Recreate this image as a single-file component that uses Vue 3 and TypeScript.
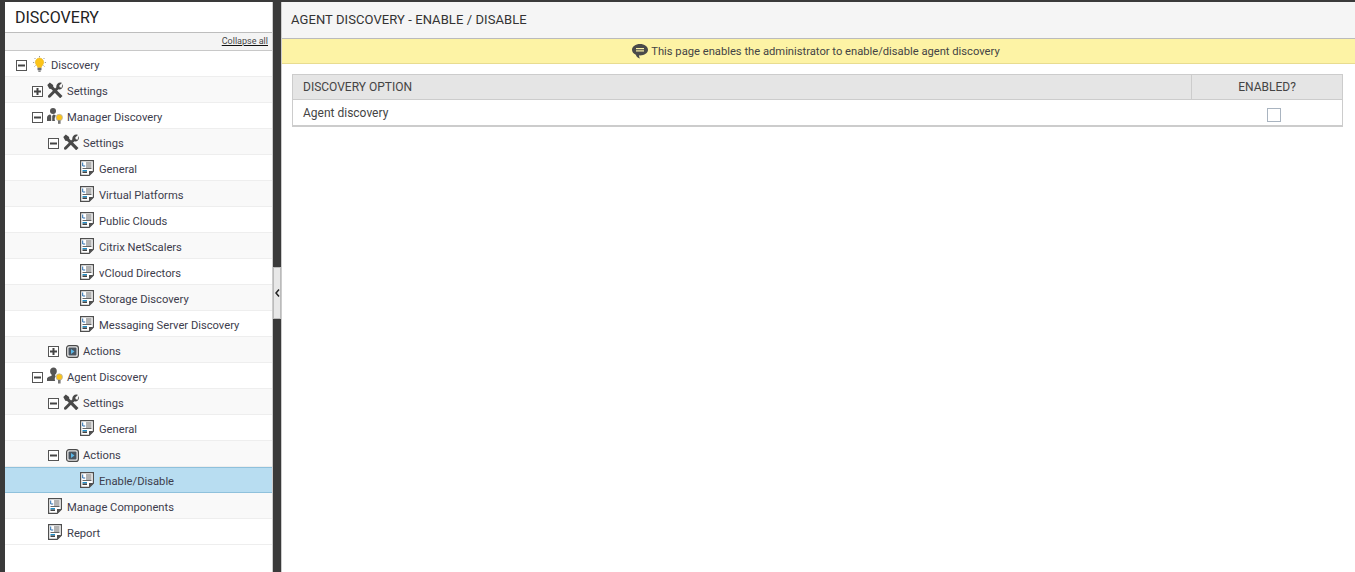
<script setup lang="ts">
type Row = { label: string; depth: number; toggle?: '+' | '-'; icon: 'bulb' | 'tools' | 'mgr' | 'agent' | 'doc' | 'action'; active?: boolean }
const rows: Row[] = [
  { label: 'Discovery', depth: 0, toggle: '-', icon: 'bulb' },
  { label: 'Settings', depth: 1, toggle: '+', icon: 'tools' },
  { label: 'Manager Discovery', depth: 1, toggle: '-', icon: 'mgr' },
  { label: 'Settings', depth: 2, toggle: '-', icon: 'tools' },
  { label: 'General', depth: 3, icon: 'doc' },
  { label: 'Virtual Platforms', depth: 3, icon: 'doc' },
  { label: 'Public Clouds', depth: 3, icon: 'doc' },
  { label: 'Citrix NetScalers', depth: 3, icon: 'doc' },
  { label: 'vCloud Directors', depth: 3, icon: 'doc' },
  { label: 'Storage Discovery', depth: 3, icon: 'doc' },
  { label: 'Messaging Server Discovery', depth: 3, icon: 'doc' },
  { label: 'Actions', depth: 2, toggle: '+', icon: 'action' },
  { label: 'Agent Discovery', depth: 1, toggle: '-', icon: 'agent' },
  { label: 'Settings', depth: 2, toggle: '-', icon: 'tools' },
  { label: 'General', depth: 3, icon: 'doc' },
  { label: 'Actions', depth: 2, toggle: '-', icon: 'action' },
  { label: 'Enable/Disable', depth: 3, icon: 'doc', active: true },
  { label: 'Manage Components', depth: 1, icon: 'doc' },
  { label: 'Report', depth: 1, icon: 'doc' },
]
</script>

<template>
  <div class="page">
    <aside class="side">
      <h1 class="side-title">DISCOVERY</h1>
      <div class="collapse-bar"><a class="collapse-link">Collapse all</a></div>
      <ul class="tree">
        <li
          v-for="(r, i) in rows"
          :key="i"
          class="row"
          :class="{ alt: i % 2 === 1, active: r.active }"
          :style="{ paddingLeft: 11 + r.depth * 16 + 'px' }"
        >
          <span class="toggle-slot">
            <svg v-if="r.toggle" width="11" height="11" viewBox="0 0 11 11">
              <rect x="0.5" y="0.5" width="10" height="10" fill="#fff" stroke="#555" />
              <rect x="2" y="4.5" width="7" height="2" fill="#444" />
              <rect v-if="r.toggle === '+'" x="4.5" y="2" width="2" height="7" fill="#444" />
            </svg>
          </span>
          <span class="icon-slot">
            <svg v-if="r.icon === 'bulb'" class="ico-bulb" width="13" height="16" viewBox="0 0 13 16">
              <path d="M6.500 0v1.300M1.500 2l1 1M11.500 2l-1 1M0 6.500h1.200M11.800 6.500H13M1.500 10.500l1-1M11.500 10.500l-1-1" stroke="#9a9a9a" stroke-width="1" fill="none" />
              <path d="M6.500 2a4.300 4.300 0 0 1 2.900 7.400c-.7.700-1 1.300-1 2.100H4.600c0-.8-.3-1.400-1-2.100A4.300 4.300 0 0 1 6.500 2z" fill="#fcc419" stroke="#e0ad10" stroke-width=".5" />
              <rect x="4.500" y="11.800" width="4" height="2.500" rx=".6" fill="#6f6f6f" />
              <rect x="5.300" y="14.400" width="2.400" height="1.500" fill="#808080" />
            </svg>
            <svg v-else-if="r.icon === 'tools'" class="ico-tools" width="16" height="16" viewBox="0 0 16 16">
              <path d="M.3 3 2.800.4l3.300 2.500.2 1.900 9.200 9.100-2.300 2.400-9.100-9.200-1.800-.3z" fill="#484848" />
              <path d="M15.500 1.900c.8 1.800.4 3.500-.7 4.600-1 .9-2.300 1.200-3.400.8l-7.900 8c-.6.6-1.500.6-2.100.1-.6-.6-.6-1.500 0-2.100l8-8C9.100 4.200 9.500 2.700 10.500 1.700 11.600.6 13.300.2 14.900.9L12.300 3.400l.4 1.900 1.900.4z" fill="#484848" />
            </svg>
            <svg v-else-if="r.icon === 'mgr'" class="ico-mgr" width="16" height="16" viewBox="0 0 16 16">
              <circle cx="6" cy="3" r="3" fill="#555" />
              <path d="M0 13v-3.200c0-1.900 1.500-3 3.300-3.300l.9 1.300V13zM5.200 13V8l1-1.500c1.100.1 2.100.5 2.700 1.200C7.700 8.800 7.300 10.900 8 13z" fill="#555" />
              <circle cx="12.300" cy="9.500" r="3.200" fill="#fcc419" stroke="#b5b5b5" stroke-width=".8" />
              <rect x="11" y="12.400" width="2.600" height="3.400" fill="#777" />
            </svg>
            <svg v-else-if="r.icon === 'agent'" class="ico-mgr" width="16" height="17" viewBox="0 0 16 17">
              <path d="M6.600.4c2 0 3.200 1.500 3.200 3.500 0 1.600-.7 2.900-1.600 3.600v1.300c.2.200.4.300.6.400-1 1-1.300 3-.7 4.800H0v-2.300c0-1.700 3.200-2.500 4.600-3V7.500C3.700 6.800 3.100 5.500 3.100 3.900 3.100 1.900 4.600.4 6.600.4z" fill="#555" />
              <circle cx="12.300" cy="10" r="3.200" fill="#fcc419" stroke="#b5b5b5" stroke-width=".8" />
              <rect x="11" y="12.900" width="2.600" height="3.600" fill="#777" />
            </svg>
            <svg v-else-if="r.icon === 'action'" class="ico-action" width="13" height="13" viewBox="0 0 13 13">
              <rect x=".6" y=".6" width="11.800" height="11.800" rx="2.500" fill="#e8e8e8" stroke="#4a4a4a" stroke-width="1.200" />
              <rect x="2.500" y="2.500" width="8" height="8" rx="1" fill="#4a5560" />
              <path d="M5 4l3.500 2.500L5 9z" fill="#5bb8e8" />
            </svg>
            <svg v-else class="ico-doc" width="14" height="16" viewBox="0 0 14 16">
              <path d="M.6.600h12.800v10.600l-4.200 4.200H.6z" fill="#fff" stroke="#4f4f4f" stroke-width="1.200" />
              <path d="M9 15.500v-4.500h4.500z" fill="#4f4f4f" />
              <path d="M2.700 2.500v3.500h2.500" stroke="#2a6fb0" stroke-width="1" fill="none" />
              <path d="M6 3h5.500M6 5h5.500M6 7h5.500M2.500 8.500h9" stroke="#666" stroke-width="1" fill="none" />
              <rect x="2.500" y="10" width="4.500" height="1.500" fill="#1f8fc9" />
              <rect x="2.500" y="11.500" width="4.500" height="1.500" fill="#444" />
            </svg>
          </span>
          <span class="label">{{ r.label }}</span>
        </li>
      </ul>
    </aside>

    <div class="splitter">
      <div class="handle">
        <svg width="5" height="8" viewBox="0 0 5 8"><path d="M4 .5 1 4l3 3.500" fill="none" stroke="#222" stroke-width="1.500" /></svg>
      </div>
    </div>

    <main class="main">
      <h2 class="main-title">AGENT DISCOVERY - ENABLE / DISABLE</h2>
      <div class="notice">
        <svg width="16" height="15" viewBox="0 0 16 15">
          <path d="M8 0c4.400 0 8 2.500 8 5.700s-3.600 5.700-8 5.700l-1-.1c0 1.200.3 2.300 1 3.200-2-.4-3.500-1.700-4.200-3.800C1.500 9.700 0 7.900 0 5.700 0 2.500 3.600 0 8 0z" fill="#4a4a4a" />
          <rect x="4" y="4" width="8" height="1.200" fill="#fdf3a5" />
          <rect x="4" y="6.300" width="8" height="1.200" fill="#fdf3a5" />
        </svg>
        <span>This page enables the administrator to enable/disable agent discovery</span>
      </div>
      <div class="content">
        <table class="grid">
          <thead>
            <tr>
              <th class="col-opt">DISCOVERY OPTION</th>
              <th class="col-en">ENABLED?</th>
            </tr>
          </thead>
          <tbody>
            <tr>
              <td class="col-opt">Agent discovery</td>
              <td class="col-en"><span class="check"></span></td>
            </tr>
          </tbody>
        </table>
      </div>
    </main>
  </div>
</template>

<style>
html, body { margin: 0; padding: 0; background: #3a3a3a; overflow: hidden; }
</style>

<style scoped>
.page {
  display: flex;
  height: 572px;
  box-sizing: border-box;
  padding: 2px 0 0 5px;
  background: #3a3a3a;
  font-family: Roboto, "Liberation Sans", sans-serif;
  color: #333;
  overflow: hidden;
}
.side {
  width: 267px;
  flex: none;
  background: #fff;
  border-right: 1px solid #ccc;
  box-sizing: content-box;
}
.side-title {
  margin: 0;
  height: 30px;
  padding-left: 10px;
  font-size: 16px;
  font-weight: 400;
  line-height: 31px;
  color: #222;
  border-bottom: 1px solid #bdbdbd;
}
.collapse-bar {
  height: 17px;
  background: #f4f4f4;
  border-bottom: 1px solid #c8c8c8;
  text-align: right;
  padding-right: 4px;
  font-size: 9px;
  line-height: 17px;
}
.collapse-link { color: #444; text-decoration: underline; text-decoration-color: #111; }
.tree { list-style: none; margin: 0; padding: 0; }
.row {
  display: flex;
  align-items: center;
  height: 21px;
  padding-top: 4px;
  border-bottom: 1px solid #eee;
  background: #fff;
  font-size: 11.2px;
}
.row.alt { background: #f9f9f9; }
.row.active {
  padding-top: 3px;
  background: #b8ddf1;
  border-top: 1px solid #8fc1dc;
  border-bottom: 1px solid #8fc1dc;
}
.toggle-slot { width: 16px; flex: none; display: flex; align-items: center; }
.icon-slot { width: 19px; flex: none; display: flex; align-items: center; }
.ico-bulb { margin-left: 1px; margin-top: -3px; }
.ico-tools { margin-left: -1px; margin-top: -3px; }
.ico-mgr { margin-left: -1px; margin-top: -4px; }
.ico-action { margin-left: 2px; }
.ico-doc { margin-top: -3px; }
.label { color: #3d3d4d; white-space: nowrap; }
.splitter {
  width: 8px;
  flex: none;
  display: flex;
  align-items: center;
  margin-top: -2px;
  padding-top: 14px;
  box-sizing: border-box;
}
.handle {
  width: 8px;
  height: 52px;
  box-sizing: border-box;
  background: #e8e8e8;
  border: 1px solid #bbb;
  display: flex;
  align-items: center;
  justify-content: center;
}
.main {
  flex: 1;
  min-width: 0;
  background: #fff;
  border-left: 1px solid #ccc;
}
.main-title {
  margin: 0;
  height: 36px;
  padding-left: 9px;
  font-size: 13px;
  font-weight: 400;
  line-height: 36px;
  background: #f5f5f5;
  color: #333;
  letter-spacing: .08px;
  border-bottom: 1px solid #bbb;
}
.notice {
  height: 24px;
  display: flex;
  align-items: center;
  justify-content: center;
  gap: 3px;
  padding-right: 5px;
  background: #fdf3a5;
  border-bottom: 1px solid #e8dc90;
  font-size: 11.2px;
  color: #444;
}
.content { padding: 10px 12px 0 10px; }
.grid {
  width: 100%;
  border-collapse: separate;
  border-spacing: 0;
  border: 1px solid #ccc;
  border-bottom-width: 2px;
  table-layout: fixed;
  font-size: 12px;
}
.grid th {
  height: 24px;
  padding: 0 10px;
  font-weight: 400;
  text-align: left;
  color: #444;
  background: #e5e5e5;
  border-bottom: 1px solid #ccc;
}
.grid th.col-en { text-align: center; }
.grid td { height: 25px; padding: 0 10px; color: #444; }
.grid .col-en { width: 151px; text-align: center; box-sizing: border-box; }
.grid th.col-en { border-left: 1px solid #ccc; }
.check {
  display: inline-block;
  width: 14px;
  height: 14px;
  box-sizing: border-box;
  border: 1px solid #a9b4c0;
  background: #fff;
  vertical-align: middle;
  margin: 5px 0 0 14px;
}
</style>
